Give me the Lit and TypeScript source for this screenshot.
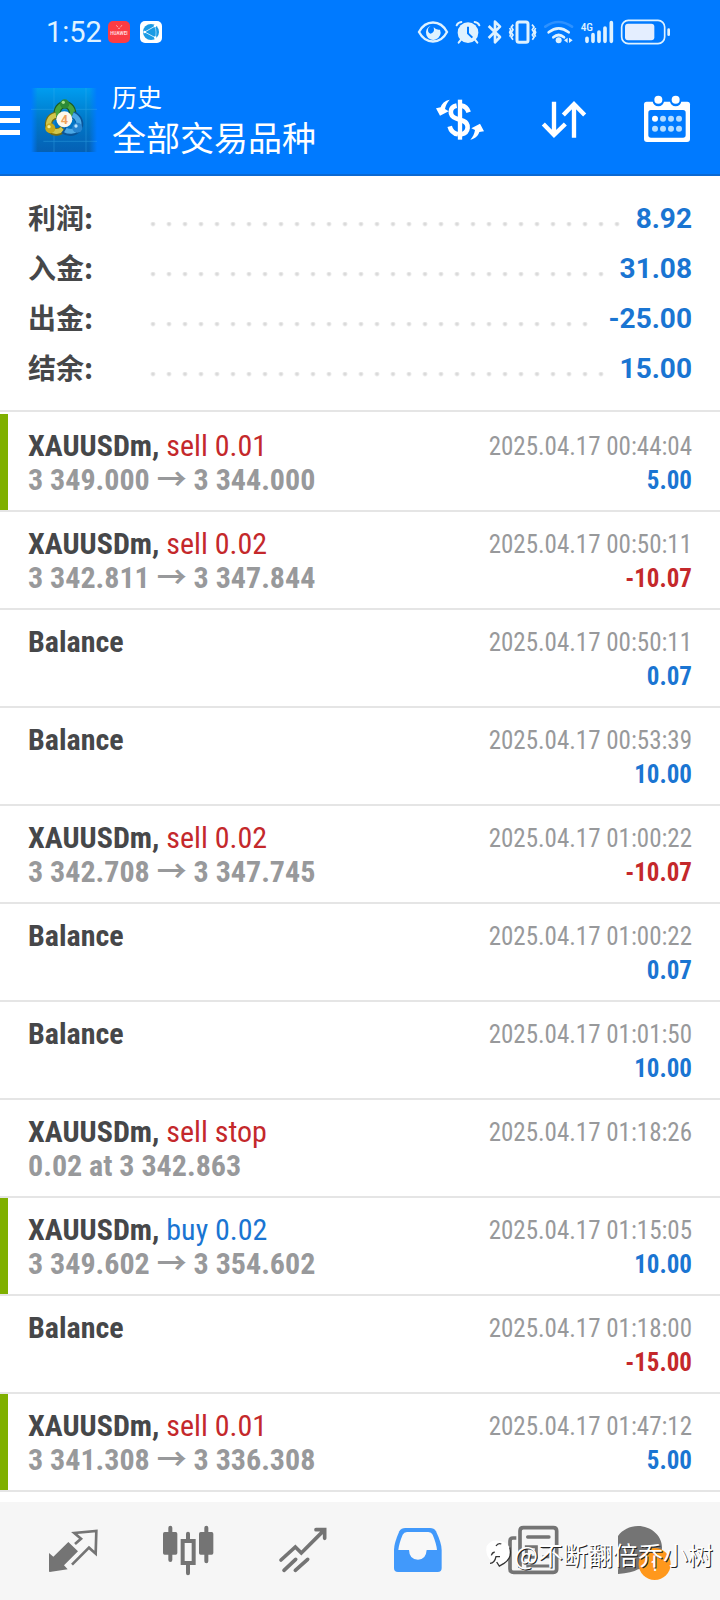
import { LitElement, html, svg, css } from "lit";
import { customElement, property } from "lit/decorators.js";
import { classMap } from "lit/directives/class-map.js";

interface Deal {
  title: string;
  side?: "buy" | "sell";
  action?: string;
  detail?: string;
  time: string;
  amount?: string;
  marked?: boolean;
}

const DEALS: Deal[] = [
  { title: "XAUUSDm,", side: "sell", action: "sell 0.01", detail: "3 349.000 → 3 344.000", time: "2025.04.17 00:44:04", amount: "5.00", marked: true },
  { title: "XAUUSDm,", side: "sell", action: "sell 0.02", detail: "3 342.811 → 3 347.844", time: "2025.04.17 00:50:11", amount: "-10.07" },
  { title: "Balance", time: "2025.04.17 00:50:11", amount: "0.07" },
  { title: "Balance", time: "2025.04.17 00:53:39", amount: "10.00" },
  { title: "XAUUSDm,", side: "sell", action: "sell 0.02", detail: "3 342.708 → 3 347.745", time: "2025.04.17 01:00:22", amount: "-10.07" },
  { title: "Balance", time: "2025.04.17 01:00:22", amount: "0.07" },
  { title: "Balance", time: "2025.04.17 01:01:50", amount: "10.00" },
  { title: "XAUUSDm,", side: "sell", action: "sell stop", detail: "0.02 at 3 342.863", time: "2025.04.17 01:18:26" },
  { title: "XAUUSDm,", side: "buy", action: "buy 0.02", detail: "3 349.602 → 3 354.602", time: "2025.04.17 01:15:05", amount: "10.00", marked: true },
  { title: "Balance", time: "2025.04.17 01:18:00", amount: "-15.00" },
  { title: "XAUUSDm,", side: "sell", action: "sell 0.01", detail: "3 341.308 → 3 336.308", time: "2025.04.17 01:47:12", amount: "5.00", marked: true },
];

const SUMMARY = [
  ["利润:", "8.92"],
  ["入金:", "31.08"],
  ["出金:", "-25.00"],
  ["结余:", "15.00"],
];

@customElement("status-bar")
class StatusBar extends LitElement {
  static styles = css`
    :host {
      display: flex;
      align-items: center;
      height: 64px;
      padding: 0 46px;
      color: #dff2ff;
      font: 400 29px/32px Roboto, sans-serif;
    }
    svg { display: block; flex: none; }
    .apps { display: flex; gap: 10px; margin-left: 6px; flex: 1; }
    .icons { display: flex; }
    .net { font: 500 34px "Roboto Condensed", Roboto, sans-serif; }
    .tiny { font: 700 14px Roboto, sans-serif; }
  `;
  render() {
    return html`
      <span>1:52</span>
      <div class="apps">
        <svg width="22" height="22" viewBox="0 0 66 66">
          <rect width="66" height="66" rx="15" fill="#fb3c44" />
          <path d="M24 13l6 5M42 12l-5 7M30 22h6" stroke="#ff9ea0" stroke-width="3" />
          <text class="tiny" x="33" y="42" text-anchor="middle" fill="#ffdcdc">HUAWEI</text>
        </svg>
        <svg width="22" height="22" viewBox="0 0 66 66">
          <rect width="66" height="66" rx="15" fill="#fff" />
          <circle cx="33" cy="33" r="24" fill="#1b9be4" />
          <path d="M46 15L14 33L46 50" stroke="#c9ecff" stroke-width="3" fill="none" />
          <path d="M44 15C49 27 49 40 46 50" stroke="#c9ecff" stroke-width="2" fill="none" />
          <circle cx="14" cy="33" r="4" fill="#fff" /><circle cx="45" cy="15" r="4" fill="#fff" /><circle cx="46" cy="50" r="4" fill="#fff" />
        </svg>
      </div>
      <div class="icons">
        <svg width="36" height="28" viewBox="168 54 108 84" fill="none" stroke="currentColor">
          <path d="M177 96C197 58 241 58 261 96C241 134 197 134 177 96Z" stroke-width="7" />
          <path d="M212 77A22 22 0 1 0 240 89A20 20 0 0 1 221 82Q225 98 212 101Q201 98 205 84Z" fill="currentColor" stroke="none" />
        </svg>
        <svg width="32" height="28" viewBox="276 54 96 84" fill="currentColor">
          <circle cx="324" cy="98" r="31" />
          <path d="M303 119l-7 9M345 119l7 9M290 76Q294 67 304 66M358 76Q354 67 344 66" fill="none" stroke="currentColor" stroke-width="6" stroke-linecap="round" />
          <path d="M324 80v20l13 13" fill="none" stroke="#007aff" stroke-width="6" />
        </svg>
        <svg width="21" height="28" viewBox="372 54 63 84" fill="none" stroke="currentColor" stroke-width="8">
          <path d="M386 78L420 111L405 127V65L420 80L386 114" stroke-linejoin="round" />
        </svg>
        <svg width="35" height="28" viewBox="435 54 105 84" fill="none" stroke="currentColor">
          <rect x="471" y="66" width="33" height="61" rx="6" stroke-width="9" />
          <path d="M460 74l-6 7 5 8-5 8 5 8-5 7 5 7M449 84l3 6-3 7 3 7-3 6M516 74l6 7-5 8 5 8-5 8 5 7-5 7M527 84l-3 6 3 7-3 7 3 6" stroke-width="5" />
        </svg>
        <svg width="37" height="28" viewBox="540 54 111 84" fill="none" stroke="currentColor" stroke-width="8" stroke-linecap="round">
          <path d="M556 80Q595 52 636 80" opacity=".2" />
          <path d="M566 97Q596 73 626 97M580 112Q596 98 612 112" />
          <circle cx="596" cy="121" r="9" fill="currentColor" stroke="none" />
          <path d="M623 113v16l-11-8zM627 113v16l11-8z" fill="currentColor" stroke="none" />
        </svg>
        <svg width="40" height="28" viewBox="651 54 120 84" fill="none" stroke="currentColor" stroke-width="11" stroke-linecap="round">
          <path d="M681 115v9M699 104v20M717 96v28M735 84v40M754 68v56" />
          <text class="net" x="662" y="92" fill="currentColor" stroke="none">4G</text>
        </svg>
        <svg width="57" height="28" viewBox="771 54 171 84" fill="none" stroke="currentColor">
          <rect x="785" y="61" width="129" height="70" rx="20" stroke-width="5" />
          <rect x="795" y="71" width="88" height="50" rx="9" fill="#e4eeff" stroke="none" />
          <path d="M926 89v15" stroke-width="8" stroke-linecap="round" />
        </svg>
      </div>
    `;
  }
}

@customElement("title-bar")
class TitleBar extends LitElement {
  static styles = css`
    :host {
      display: flex;
      align-items: center;
      height: 110px;
      border-bottom: 2px solid #0c69d2;
      color: #fff;
      font-family: "Noto Sans CJK SC", sans-serif;
    }
    svg { display: block; }
    button { border: 0; padding: 0; background: none; color: inherit; cursor: pointer; }
    .menu { width: 20px; padding-top: 4px; }
    .logo { margin: 2px 15px 0 11px; }
    .titles { flex: 1; padding-bottom: 2px; }
    .sub { font-size: 25px; line-height: 38px; }
    h1 { margin: 0; font-size: 34px; line-height: 44px; font-weight: 400; }
    .action { width: 104px; display: flex; justify-content: center; }
    .digit { font: 700 38px Roboto, sans-serif; }
  `;
  render() {
    return html`
      <button class="menu" aria-label="菜单">
        <svg width="20" height="30" viewBox="0 0 20 30" fill="#fff">
          <path d="M0 0h20v5H0zM0 12h20v5H0zM0 24h20v5H0z" />
        </svg>
      </button>
      <svg class="logo" width="66" height="64" viewBox="93 264 198 192">
        <defs>
          <linearGradient id="bg" x1="0" y1="0" x2="0" y2="1">
            <stop offset="0" stop-color="#009df0" /><stop offset=".5" stop-color="#0078c8" /><stop offset="1" stop-color="#0560b4" />
          </linearGradient>
          <linearGradient id="edge" x1="0" y1="0" x2="1" y2="0">
            <stop offset="0" stop-color="#007aff" /><stop offset=".1" stop-color="#007aff" stop-opacity="0" />
            <stop offset=".88" stop-color="#007aff" stop-opacity="0" /><stop offset="1" stop-color="#007aff" />
          </linearGradient>
        </defs>
        <rect x="93" y="264" width="198" height="192" fill="url(#bg)" />
        <rect x="93" y="264" width="198" height="192" fill="url(#edge)" />
        <path d="M162 264v192M258 264v192M93 328h198M130 424h161" stroke="#3fb4ee" stroke-width="2" opacity=".5" />
        <path d="M172 350C168 328 180 314 194 314C210 314 220 328 218 350" stroke="#1d5c22" stroke-width="22" fill="none" />
        <path d="M172 348C168 328 180 314 194 314C210 314 220 328 218 348" stroke="#49a53f" stroke-width="15" fill="none" />
        <path d="M168 346C146 350 140 374 151 388C162 400 180 398 190 386" stroke="#766d12" stroke-width="22" fill="none" />
        <path d="M168 346C146 350 140 374 151 388C162 398 178 396 188 386" stroke="#d0c64c" stroke-width="15" fill="none" />
        <path d="M218 344C238 352 244 372 234 386C222 400 204 400 190 390" stroke="#0a5599" stroke-width="22" fill="none" />
        <path d="M218 344C236 352 242 372 232 385C222 396 206 396 196 390" stroke="#4ba8e6" stroke-width="15" fill="none" />
        <circle cx="194" cy="312" r="14" fill="#2c8a37" /><circle cx="190" cy="307" r="5" fill="#a3e08c" />
        <circle cx="151" cy="385" r="15" fill="#c5a91c" /><circle cx="147" cy="380" r="5" fill="#f7ee90" />
        <circle cx="232" cy="383" r="15" fill="#2684d0" /><circle cx="228" cy="378" r="5" fill="#b9e4ff" />
        <circle cx="193" cy="358" r="24" fill="#fdf8ec" />
        <text class="digit" x="193" y="372" text-anchor="middle" fill="#efa25a">4</text>
      </svg>
      <div class="titles">
        <div class="sub">历史</div>
        <h1>全部交易品种</h1>
      </div>
      <button class="action" aria-label="交易品种">
        <svg width="60" height="60" viewBox="210 268 180 180" fill="none" stroke="#fff">
          <path d="M300 300v120" stroke-width="13" />
          <path d="M290 318C268 322 266 348 288 356L310 364C328 372 328 398 304 404M304 318Q320 320 326 338M294 404Q274 400 269 380" stroke-width="14" />
          <path d="M269 300C254 303 245 312 242 323L228 326L240 348L266 335L255 328C257 317 261 309 269 300Z" fill="#fff" stroke="none" />
          <path d="M331 420C346 417 355 408 358 397L372 395L360 372L334 386L345 391C343 403 339 411 331 420Z" fill="#fff" stroke="none" />
        </svg>
      </button>
      <button class="action" aria-label="排序">
        <svg width="60" height="60" viewBox="522 268 180 180" fill="none" stroke="#fff" stroke-width="13">
          <path d="M582 306v100M550 373l32 33 34-33M642 414V314M610 346l32-33 32 33" />
        </svg>
      </button>
      <button class="action" aria-label="日期">
        <svg width="60" height="60" viewBox="834 268 180 180">
          <path d="M860 306H982Q990 306 990 314V418Q990 427 981 427H861Q852 427 852 418V314Q852 306 860 306Z" fill="#fff" />
          <rect x="865" y="331" width="112" height="83" rx="8" fill="#007aff" />
          <path d="M878 304a17 16 0 0 0 34 0zM930 304a17 16 0 0 0 34 0z" fill="#007aff" />
          <circle cx="895" cy="300" r="12" fill="#fff" /><circle cx="947" cy="300" r="12" fill="#fff" />
          ${[885, 909, 933, 957].map(
            (x, i) => svg`<circle cx=${x} cy="357" r="9" fill=${i ? "#b4dcff" : "#fff"} /><circle cx=${x} cy="387" r="9" fill="#b4dcff" />`
          )}
        </svg>
      </button>
    `;
  }
}

@customElement("account-summary")
class AccountSummary extends LitElement {
  static styles = css`
    :host {
      display: block;
      padding: 17px 28px;
      border-bottom: 2px solid #e5e5e5;
    }
    dl { margin: 0; }
    .line { display: flex; align-items: center; height: 50px; }
    dt {
      width: 122px;
      padding-bottom: 2px;
      color: #464749;
      font: 700 28px/40px "Noto Sans CJK SC", sans-serif;
    }
    .dots {
      flex: 1;
      height: 5px;
      margin: 12px 12px 0 0;
      background: radial-gradient(circle at 3px 2px, #dadada 1px, transparent 3px) 0 0 / 16px 5px repeat-x;
    }
    dd { margin: 0; padding-top: 2px; color: #1a75d2; font: 700 28px/40px Roboto, sans-serif; }
  `;
  render() {
    return html`<dl>
      ${SUMMARY.map(([k, v]) => html`<div class="line"><dt>${k}</dt><span class="dots"></span><dd>${v}</dd></div>`)}
    </dl>`;
  }
}

@customElement("deal-row")
class DealRow extends LitElement {
  @property({ attribute: false }) deal!: Deal;
  static styles = css`
    :host { display: block; border-bottom: 2px solid #e5e5e5; }
    .row {
      display: flex;
      justify-content: space-between;
      height: 96px;
      border-left: 8px solid transparent;
      padding: 0 28px 0 20px;
      font: 400 30px/34px "Roboto Condensed", "Liberation Sans Narrow", Roboto, "Noto Sans CJK SC", sans-serif;
    }
    .marked { border-left-color: #7fb000; }
    .left { padding-top: 15px; white-space: nowrap; }
    .right { padding-top: 16px; text-align: right; font-size: 25px; white-space: nowrap; }
    .title { font-weight: 700; color: #464749; }
    .sell { color: #c4282b; }
    .buy { color: #1a75d2; }
    .detail { font-weight: 700; color: #98999b; }
    .time { color: #98999b; }
    .amount { font-weight: 700; color: #1a75d2; }
    .loss { color: #c4282b; }
  `;
  render() {
    const d = this.deal;
    return html`<div class=${classMap({ row: true, marked: !!d.marked })}>
      <div class="left">
        <div><span class="title">${d.title}</span> <span class=${d.side ?? ""}>${d.action ?? ""}</span></div>
        <div class="detail">${d.detail ?? ""}</div>
      </div>
      <div class="right">
        <div class="time">${d.time}</div>
        <div class=${classMap({ amount: true, loss: !!d.amount?.startsWith("-") })}>${d.amount ?? ""}</div>
      </div>
    </div>`;
  }
}

@customElement("tab-bar")
class TabBar extends LitElement {
  static styles = css`
    :host { display: block; background: #f6f6f6; }
    nav {
      display: grid;
      grid-template-columns: repeat(6, 1fr);
      align-items: center;
      height: 98px;
      padding: 0 15px;
    }
    a { display: flex; justify-content: center; color: #747474; }
    svg { display: block; }
    .current { color: #4199fb; }
    .badge { font: 500 44px Roboto, sans-serif; }
  `;
  render() {
    return html`<nav>
      <a href="#quotes" aria-label="行情">
        <svg width="60" height="60" viewBox="130 123 180 180" fill="currentColor">
          <path d="M206 186L235 214L193 256L204 268L150 276Q148 276 148 272V219L161 230Z" />
          <path d="M226 192L244 176L224 159L290 153L288 221L268 203L217 254" fill="none" stroke="currentColor" stroke-width="8" />
        </svg>
      </a>
      <a href="#charts" aria-label="图表">
        <svg width="60" height="60" viewBox="475 123 180 180" fill="none" stroke="currentColor" stroke-width="12">
          <path d="M512 143v97M620 143v101M565 161v18M565 252v28" stroke-linecap="round" />
          <rect x="490" y="156" width="43" height="68" rx="5" fill="currentColor" stroke="none" />
          <rect x="598" y="156" width="43" height="68" rx="5" fill="currentColor" stroke="none" />
          <rect x="549" y="183" width="33" height="66" />
        </svg>
      </a>
      <a href="#trade" aria-label="交易">
        <svg width="60" height="60" viewBox="820 123 180 180" fill="none" stroke="currentColor" stroke-width="11" stroke-linecap="round">
          <path d="M844 240L887 201L905 219L972 152M949 149H975V175M853 271L888 238M887 271L924 238" />
        </svg>
      </a>
      <a href="#history" class="current" aria-label="历史">
        <svg width="60" height="60" viewBox="86 123 180 180">
          <path d="M138 144H212Q224 144 230 154Q247 190 247 210V264Q247 276 235 276H116Q104 276 104 264V210Q104 190 120 154Q126 144 138 144Z" fill="currentColor" />
          <path d="M143 156H207Q216 156 220 164Q231 190 233 210H202Q200 239 176 239Q150 239 149 210H117Q119 190 130 164Q134 156 143 156Z" fill="#f8f8f8" />
        </svg>
      </a>
      <a href="#news" aria-label="新闻">
        <svg width="60" height="60" viewBox="430 123 180 180" fill="none" stroke="currentColor" stroke-width="11">
          <path d="M481 264V153Q481 143 491 143H581Q591 143 591 153V267Q591 277 581 277H462Q451 277 451 267V183Q451 174 460 174H470" />
          <path d="M504 171H568" stroke-width="10" stroke-linecap="round" />
          <path d="M500 200H530V232H500ZM548 201H570M548 230H570M500 258H570" stroke-width="9" />
        </svg>
      </a>
      <a href="#messages" aria-label="消息 1">
        <svg width="60" height="60" viewBox="778 123 180 180">
          <path d="M838 138C876 138 910 166 910 202C910 240 876 266 838 268Q818 280 767 283Q782 270 783 250Q767 232 767 202C767 166 800 138 838 138Z" fill="currentColor" />
          <circle cx="888" cy="252" r="48" fill="#ff981c" />
          <text class="badge" x="888" y="272" text-anchor="middle" fill="#fff">1</text>
        </svg>
      </a>
    </nav>`;
  }
}

@customElement("app-root")
class AppRoot extends LitElement {
  static styles = css`
    :host { display: block; position: relative; min-height: 100vh; background: #fff; }
    header { background: #007aff; }
    .deals { padding: 2px 0 10px; }
    .credit {
      position: absolute;
      right: 7px;
      bottom: 28px;
      display: flex;
      align-items: center;
      gap: 2px;
      color: #fff;
      font: 400 25px/36px "Noto Sans CJK SC", sans-serif;
      text-shadow: 1px 1px 0 #222;
      pointer-events: none;
    }
    .credit svg { display: block; }
  `;
  render() {
    return html`
      <header><status-bar></status-bar><title-bar></title-bar></header>
      <main>
        <account-summary></account-summary>
        <div class="deals">${DEALS.map((d) => html`<deal-row .deal=${d}></deal-row>`)}</div>
      </main>
      <tab-bar></tab-bar>
      <div class="credit">
        <svg width="26" height="28" viewBox="370 192 78 84">
          <path d="M388 256Q366 240 372 210Q384 190 406 194Q440 196 444 226Q444 256 410 266L402 262Q386 266 388 256Z" fill="#fff" />
          <path d="M386 238Q388 230 396 228M400 210Q406 200 416 204M382 262Q396 262 400 242H412M441 214Q450 246 424 262L410 270L402 258" fill="none" stroke="#333" stroke-width="4" />
        </svg>
        <span>@不断翻倍乔小树</span>
      </div>
    `;
  }
}
